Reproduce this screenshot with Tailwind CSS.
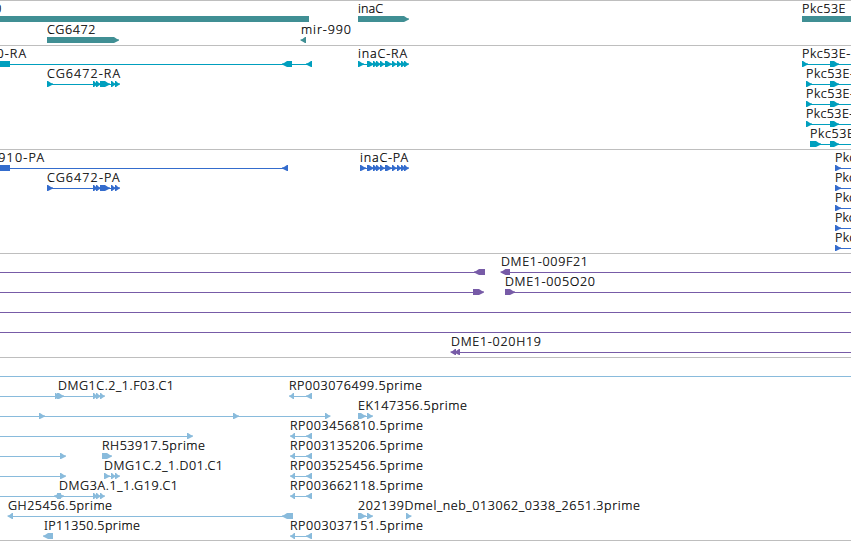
<!DOCTYPE html>
<html lang="en">
  <head>
    <meta charset="UTF-8" />
    <title>Genome tracks</title>
    <script src="https://cdn.jsdelivr.net/npm/@tailwindcss/browser@4"></script>
  </head>
  <body class="bg-white overflow-hidden">
    <main class="flex flex-col w-[851px] h-[541px] border-b border-[#bebebe] text-black">
      <section class="h-[45px] border-t border-[#bebebe]">
        <svg id="genes" class="block w-full h-full text-[#408f94]" viewBox="0 1 851 44"></svg>
      </section>
      <section class="h-[104px] border-t border-[#bebebe]">
        <svg id="transcripts" class="block w-full h-full text-[#009fbe]" viewBox="0 46 851 103"></svg>
      </section>
      <section class="h-[104px] border-t border-[#bebebe]">
        <svg id="proteins" class="block w-full h-full text-[#346ccd]" viewBox="0 150 851 103"></svg>
      </section>
      <section class="h-[104px] border-t border-[#bebebe]">
        <svg id="clones" class="block w-full h-full text-[#775ba7]" viewBox="0 254 851 103"></svg>
      </section>
      <section class="h-[183px] border-t border-[#bebebe]">
        <svg id="ests" class="block w-full h-full text-[#89bbdc]" viewBox="0 358 851 182"></svg>
      </section>
    </main>

    <script>
      // feature: [y, [line start, line end] or null, exons, label]
      // exon: [start, end, strand], label: [text, x, width]
      const inaC = [[367, 374, 1], [373, 378, 1], [376, 381, 1], [380, 385, 1], [385, 392, 1], [392, 397, 1], [397, 402, 1], [401, 406, 1], [404, 409, 1]];
      const cg6472 = [[47, 53, 1], [93, 98, 1], [96, 101, 1], [100, 110, 1], [111, 116, 1], [115, 120, 1]];
      const tracks = {
        genes: [
          [19, null, [[-10, 309, 0]], ["CG6910", -47, 48.5]],
          [40, null, [[47, 119, 1]], ["CG6472", 47, 48.5]],
          [40, null, [[300.5, 306, -1]], ["mir-990", 301, 50]],
          [19, null, [[358, 409, 1]], ["inaC", 358, 25]],
          [19, null, [[802, 860, 0]], ["Pkc53E", 802, 43.5]],
        ],
        transcripts: [
          [64, [0, 311], [[-10, 10, 0], [282, 292, -1], [306, 312, -1]], ["CG6910-RA", -47, 73]],
          [84, [47, 119], cg6472, ["CG6472-RA", 47, 73]],
          [64, [358, 408], [[358, 364, 1], ...inaC], ["inaC-RA", 358, 49]],
          [64, [802, 851], [[802, 808, 1], [830, 839, 1]], ["Pkc53E-RA", 802, 64.5]],
          [84, [806, 851], [[806, 812, 1], [830, 839, 1]], ["Pkc53E-RB", 806, 64.5]],
          [104, [806, 851], [[806, 812, 1], [830, 839, 1]], ["Pkc53E-RC", 806, 64.5]],
          [124, [806, 851], [[806, 812, 1], [830, 839, 1]], ["Pkc53E-RD", 806, 64.5]],
          [144, [810, 851], [[810, 821, 1], [830, 839, 1]], ["Pkc53E-RE", 810, 64.5]],
        ],
        proteins: [
          [168, [0, 287], [[-10, 10, 0], [282, 288, -1]], ["CG6910-PA", -29, 73]],
          [188, [47, 119], cg6472, ["CG6472-PA", 47, 72.5]],
          [168, [360, 408], [[360, 366, 1], ...inaC], ["inaC-PA", 360, 48]],
          [168, [835, 851], [[835, 841, 1]], ["Pkc53E-PA", 835, 62]],
          [188, [835, 851], [[835, 841, 1]], ["Pkc53E-PB", 835, 62]],
          [208, [835, 851], [[835, 841, 1]], ["Pkc53E-PC", 835, 62]],
          [228, [835, 851], [[835, 841, 1]], ["Pkc53E-PD", 835, 62]],
          [248, [835, 851], [[835, 841, 1]], ["Pkc53E-PE", 835, 62]],
        ],
        clones: [
          [272, [0, 480], [[474, 485, -1]]],
          [272, [505, 851], [[500.5, 510, -1]], ["DME1-009F21", 501, 87]],
          [292, [0, 480], [[473, 484, 1]]],
          [292, [506, 851], [[505, 515, 1]], ["DME1-005O20", 505, 90]],
          [312, [0, 851], []],
          [332, [0, 851], []],
          [352, [452, 851], [[450.5, 456, -1], [454, 460, -1]], ["DME1-020H19", 451, 90]],
        ],
        ests: [
          [376, [0, 851], []],
          [396, [0, 103], [[55, 60, 1], [57, 64, 1], [93, 98, 1], [96, 101, 1], [100, 105, 1]], ["DMG1C.2_1.F03.C1", 58, 116]],
          [396, [290, 311], [[289, 294, -1], [306, 312, -1]], ["RP003076499.5prime", 289, 133]],
          [416, [0, 329], [[39, 45, 1], [233, 239, 1], [325, 330.5, 1]]],
          [416, [358, 372], [[358, 366, 1], [367, 373, 1]], ["EK147356.5prime", 358, 109]],
          [436, [0, 191], [[187, 193, 1]]],
          [436, [291, 311], [[290, 295, -1], [306, 312, -1]], ["RP003456810.5prime", 290, 133]],
          [456, [0, 64], [[60, 66, 1]]],
          [456, null, [[102, 112, 1]], ["RH53917.5prime", 102, 103]],
          [456, [291, 311], [[290, 295, -1], [306, 312, -1]], ["RP003135206.5prime", 290, 133]],
          [476, [0, 64], [[60, 66, 1]]],
          [476, [104, 119], [[104, 110, 1], [111, 116, 1], [115, 120, 1]], ["DMG1C.2_1.D01.C1", 104, 119]],
          [476, [291, 311], [[290, 295, -1], [306, 312, -1]], ["RP003525456.5prime", 290, 133]],
          [496, [0, 103], [[54, 61, -1], [57, 64, 1], [93, 98, 1], [96, 101, 1], [100, 105, 1]], ["DMG3A.1_1.G19.C1", 59, 119]],
          [496, [291, 311], [[290, 295, -1], [306, 312, -1]], ["RP003662118.5prime", 290, 133]],
          [516, [9, 290], [[7.5, 13, -1], [282, 293, -1]], ["GH25456.5prime", 8, 104]],
          [516, [358, 372], [[358, 366, 1], [367, 373, 1], [406, 411.5, 1]], ["202139Dmel_neb_013062_0338_2651.3prime", 358, 282]],
          [536, null, [[43, 53, -1]], ["IP11350.5prime", 44, 96]],
          [536, [291, 311], [[290, 295, -1], [306, 312, -1]], ["RP003037151.5prime", 290, 133]],
        ],
      };

      // arrow heads are slightly blunt: full height, shoulder, tip
      function exonPoints([a, b, strand], y) {
        if (strand === 0) return `${a},${y - 3} ${b},${y - 3} ${b},${y + 3} ${a},${y + 3}`;
        const head = Math.min(5, b - a - 1);
        const [back, tip] = strand > 0 ? [a, b] : [b, a];
        const neck = tip - head * strand;
        const mid = tip - 2 * strand;
        return `${back},${y - 3} ${neck},${y - 3} ${mid},${y - 1} ${tip},${y - 0.5} ${tip},${y + 0.5} ${mid},${y + 1.5} ${neck},${y + 3} ${back},${y + 3}`;
      }

      for (const [id, features] of Object.entries(tracks)) {
        let out = "";
        for (const [y, line, exons, label] of features) {
          if (line) {
            out += `<rect x="${line[0]}" y="${y}" width="${line[1] - line[0]}" height="1" fill="currentColor" />`;
          }
          for (const exon of exons) {
            out += `<polygon points="${exonPoints(exon, y)}" fill="currentColor" />`;
          }
          if (label) {
            const [text, x, width] = label;
            out += `<text x="${x}" y="${y - 6}" textLength="${width}" class="fill-black stroke-black stroke-[0.2px] font-light text-[12.5px] font-['Noto_Sans',sans-serif]">${text}</text>`;
          }
        }
        document.getElementById(id).innerHTML = out;
      }
    </script>
  </body>
</html>
